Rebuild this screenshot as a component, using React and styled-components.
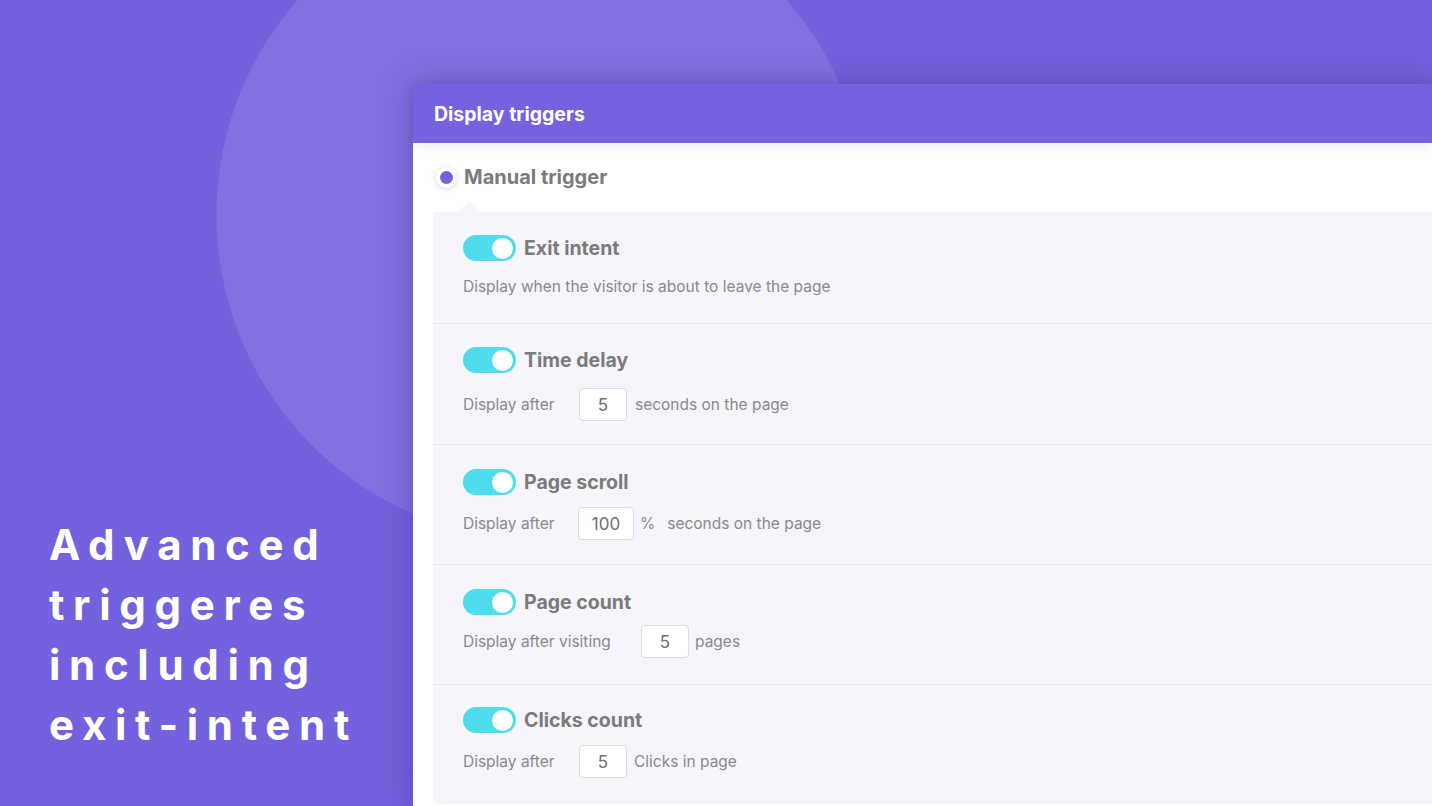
import { createGlobalStyle, styled } from "styled-components";

const GlobalStyle = createGlobalStyle`
    html, body {
        margin: 0;
        padding: 0;
    }
    body {
        font-family: Inter, "Noto Sans", "Liberation Sans", sans-serif;
    }
`;

const Page = styled.div`
    position: relative;
    display: flex;
    width: 1432px;
    height: 806px;
    overflow: hidden;
    background:
        radial-gradient(circle 326px at 542px 215px, rgba(255, 255, 255, 0.1) 99.7%, transparent 100%),
        #7461dd;
`;

const Side = styled.div`
    width: 413px;
    flex-shrink: 0;
    display: flex;
    flex-direction: column;
    justify-content: flex-end;
    padding: 0 0 51px 49px;
    box-sizing: border-box;
`;

const Headline = styled.h1`
    margin: 0;
    color: #fff;
    font-size: 42px;
    font-weight: 700;
    line-height: 60px;
    letter-spacing: 8.7px;
`;

const Panel = styled.div`
    flex: 1;
    margin-top: 84px;
    background: #fff;
    box-shadow: 0 0 28px rgba(45, 25, 120, 0.35);
    display: flex;
    flex-direction: column;
    min-width: 0;
`;

const PanelHeader = styled.div`
    flex-shrink: 0;
    height: 59px;
    display: flex;
    align-items: center;
    padding-left: 21px;
    background: #7662df;
    color: #fff;
    font-size: 19.5px;
    font-weight: 700;
    position: relative;
    box-shadow: 0 3px 10px rgba(0, 0, 0, 0.07);
`;

const RadioRow = styled.div`
    flex-shrink: 0;
    height: 69px;
    display: flex;
    align-items: center;
    padding-left: 23px;
    gap: 7px;
    box-sizing: border-box;
    padding-bottom: 1px;
`;

const Radio = styled.span`
    width: 21px;
    height: 21px;
    border-radius: 50%;
    background: #fff;
    box-shadow: 0 1px 5px rgba(60, 40, 140, 0.22);
    display: flex;
    align-items: center;
    justify-content: center;

    &:after {
        content: '';
        width: 13px;
        height: 13px;
        border-radius: 50%;
        background: #7461dd;
    }
`;

const Label = styled.span`
    color: #7b7b7b;
    font-size: ${p => p.$size || 19.5}px;
    font-weight: 700;
`;

const Options = styled.div`
    position: relative;
    flex: 1;
    margin: 0 0 2px 20px;
    background: #f5f5fb;
    border-bottom-left-radius: 8px;

    &:before {
        content: '';
        position: absolute;
        top: -10px;
        left: 26px;
        border-left: 10px solid transparent;
        border-right: 10px solid transparent;
        border-bottom: 10px solid #f5f5fb;
    }
`;

const Section = styled.div`
    padding: ${p => p.$pt}px 30px ${p => p.$pb}px;
    border-bottom: ${p => p.$last ? 'none' : '1px solid #e9e9f1'};
    display: flex;
    flex-direction: column;
    gap: ${p => p.$gap}px;
`;

const TitleRow = styled.div`
    display: flex;
    align-items: center;
    gap: 8px;
    height: 26px;
`;

const Toggle = styled.span`
    width: 53px;
    height: 26px;
    border-radius: 13px;
    background: #4fdcec;
    display: flex;
    align-items: center;
    justify-content: flex-end;
    padding-right: 3px;
    box-sizing: border-box;

    &:after {
        content: '';
        width: 21px;
        height: 21px;
        border-radius: 50%;
        background: #fff;
    }
`;

const Controls = styled.div`
    display: flex;
    align-items: center;
    min-height: ${p => p.$h || 33}px;
    color: #8a8a8a;
    font-size: 15.5px;
`;

const Text = styled.span`
    width: ${p => p.$w ? `${p.$w}px` : 'auto'};
    margin-left: ${p => p.$ml || 0}px;
    flex-shrink: 0;
`;

const NumberBox = styled.span`
    width: ${p => p.$w || 48}px;
    height: 33px;
    box-sizing: border-box;
    border: 1px solid #dcdcdc;
    border-radius: 4px;
    background: #fff;
    display: flex;
    align-items: center;
    justify-content: center;
    color: #6f6f6f;
    font-size: 17px;
    padding-top: 1px;
`;

const triggers = [
    { title: "Exit intent", desc: "Display when the visitor is about to leave the page", pt: 23, gap: 15, pb: 27 },
    { title: "Time delay", label: "Display after", lw: 116, value: "5", after: [{ t: "seconds on the page", ml: 8 }], pt: 23, gap: 15, pb: 23 },
    { title: "Page scroll", label: "Display after", lw: 115, value: "100", bw: 56, after: [{ t: "%", ml: 6 }, { t: "seconds on the page", ml: 12 }], pt: 24, gap: 12, pb: 24 },
    { title: "Page count", label: "Display after visiting", lw: 178, value: "5", after: [{ t: "pages", ml: 6 }], pt: 24, gap: 10, pb: 26 },
    { title: "Clicks count", label: "Display after", lw: 116, value: "5", after: [{ t: "Clicks in page", ml: 7 }], pt: 22, gap: 12, pb: 23 },
];

export default function App() {
    return (
        <>
            <GlobalStyle />
            <Page>
                <Side>
                    <Headline>
                        Advanced<br />triggeres<br />including<br />exit-intent
                    </Headline>
                </Side>
                <Panel>
                    <PanelHeader>Display triggers</PanelHeader>
                    <RadioRow>
                        <Radio />
                        <Label $size={20}>Manual trigger</Label>
                    </RadioRow>
                    <Options>
                        {triggers.map((t, i) => (
                            <Section
                                key={t.title}
                                $last={i === triggers.length - 1}
                                $pt={t.pt}
                                $gap={t.gap}
                                $pb={t.pb}
                            >
                                <TitleRow>
                                    <Toggle />
                                    <Label>{t.title}</Label>
                                </TitleRow>
                                {t.desc ? (
                                    <Controls $h={20}>{t.desc}</Controls>
                                ) : (
                                    <Controls>
                                        <Text $w={t.lw}>{t.label}</Text>
                                        <NumberBox $w={t.bw}>{t.value}</NumberBox>
                                        {t.after.map(a => (
                                            <Text key={a.t} $ml={a.ml}>{a.t}</Text>
                                        ))}
                                    </Controls>
                                )}
                            </Section>
                        ))}
                    </Options>
                </Panel>
            </Page>
        </>
    );
}
